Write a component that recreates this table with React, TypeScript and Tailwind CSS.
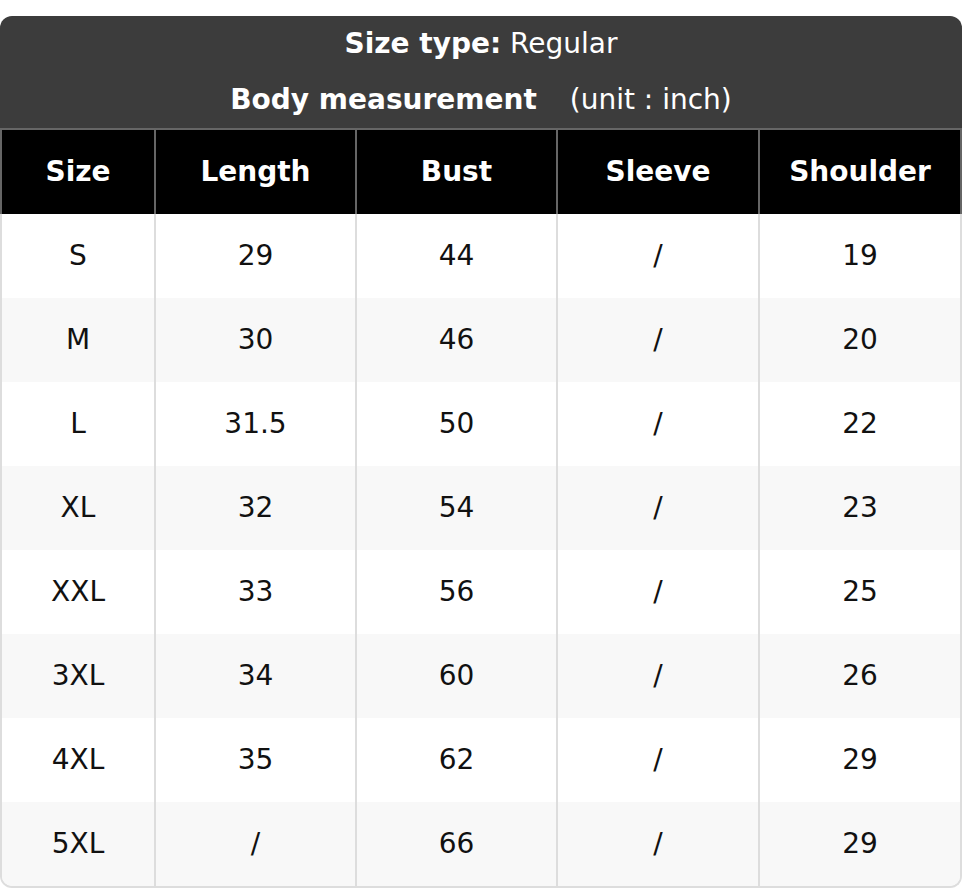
import React from "react";

type Row = {
  size: string;
  length: string;
  bust: string;
  sleeve: string;
  shoulder: string;
};

const columns = ["Size", "Length", "Bust", "Sleeve", "Shoulder"];

const rows: Row[] = [
  { size: "S", length: "29", bust: "44", sleeve: "/", shoulder: "19" },
  { size: "M", length: "30", bust: "46", sleeve: "/", shoulder: "20" },
  { size: "L", length: "31.5", bust: "50", sleeve: "/", shoulder: "22" },
  { size: "XL", length: "32", bust: "54", sleeve: "/", shoulder: "23" },
  { size: "XXL", length: "33", bust: "56", sleeve: "/", shoulder: "25" },
  { size: "3XL", length: "34", bust: "60", sleeve: "/", shoulder: "26" },
  { size: "4XL", length: "35", bust: "62", sleeve: "/", shoulder: "29" },
  { size: "5XL", length: "/", bust: "66", sleeve: "/", shoulder: "29" },
];

const gridCols = "grid grid-cols-[152px_201px_201px_202px_202px]";

const App: React.FC = () => {
  return (
    <div className="w-[962px] h-[888px] bg-white pt-4 font-['DejaVu_Sans',sans-serif] text-[28px]">
      <div className="rounded-t-[12px] bg-[#3c3c3c] text-white text-center leading-[56px]">
        <p>
          <span className="font-bold">Size type:</span> Regular
        </p>
        <p>
          <span className="font-bold">Body measurement</span>
          <span className="ml-[33px]">(unit : inch)</span>
        </p>
      </div>

      <div className={`${gridCols} h-[86px] bg-black text-white font-bold border-x-2 border-t-2 border-[#666]`}>
        {columns.map((col, idx) => (
          <div
            key={col}
            className={`flex items-center justify-center ${idx > 0 ? "border-l-2 border-[#666]" : ""}`}
          >
            {col}
          </div>
        ))}
      </div>

      <div className="border-x-2 border-b-2 border-[#ddd] rounded-b-[12px] overflow-hidden text-[#111]">
        {rows.map((row, i) => (
          <div
            key={row.size}
            className={`${gridCols} h-[84px] ${i % 2 === 1 ? "bg-[#f8f8f8]" : "bg-white"}`}
          >
            {[row.size, row.length, row.bust, row.sleeve, row.shoulder].map((val, idx) => (
              <div
                key={idx}
                className={`flex items-center justify-center ${idx > 0 ? "border-l-2 border-[#ddd]" : ""}`}
              >
                {val}
              </div>
            ))}
          </div>
        ))}
      </div>
    </div>
  );
};

export default App;
